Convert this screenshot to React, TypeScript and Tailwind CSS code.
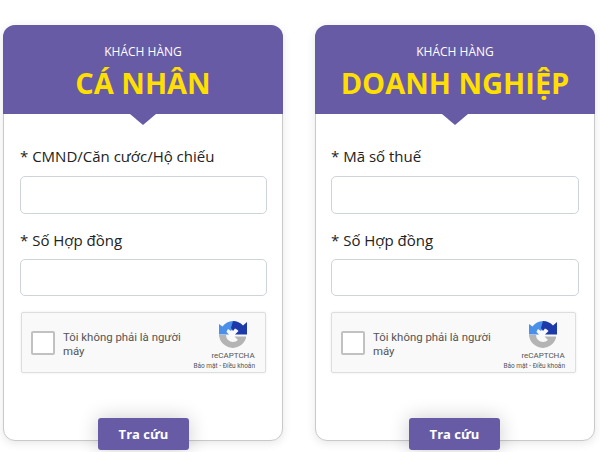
const font = { fontFamily: '"Open Sans", "Noto Sans", sans-serif' };

function RecaptchaLogo() {
  return (
    <svg width="28" height="28" viewBox="0 0 28 28">
      <path d="M14 0 L14 7 L12 10 L9 8 A7 7 0 0 0 7.5 11 L10 13.5 L0 13.5 L0 3 L3.5 5.5 A13.5 13.5 0 0 1 14 0 Z" fill="#4a90e8" />
      <path d="M14 0 A13.5 13.5 0 0 1 24 4.5 L28 1 L28 13.5 L16 13.5 L19.5 10 A7 7 0 0 0 16 7.5 L14 10 L12 7 Z" fill="#1c3aa9" />
      <path d="M0 14 L7 14 A7 7 0 0 0 14 21 A7 7 0 0 0 19 19 L15.5 15.5 L27 15.5 L27 17 A13.8 13.8 0 0 1 0 14 Z" fill="#b4b4b4" />
    </svg>
  );
}

function Captcha() {
  return (
    <div className="w-[245px] h-[61px] flex items-stretch bg-[#f9f9f9] border border-[#dedede] rounded-[2px] shadow-[0_0_3px_rgba(0,0,0,0.08)]">
      <div className="flex items-center pl-[9px] pr-[8px]">
        <div className="w-[24px] h-[24px] bg-white border-2 border-[#c1c1c1] rounded-[2px]" />
      </div>
      <div className="flex-1 flex items-center text-[11.4px] leading-[14px] text-[#555] pr-1 pt-[2px]" style={{ fontFamily: '"Roboto", sans-serif' }}>
        <span>Tôi không phải là người máy</span>
      </div>
      <div className="w-[68px] shrink-0 flex flex-col items-center pt-[8px] pr-[2px] text-[#555]" style={{ fontFamily: '"Roboto", sans-serif' }}>
        <div className="pl-[6px]"><RecaptchaLogo /></div>
        <span className="text-[8px] leading-[10px] mt-[2px] pl-[6px]">reCAPTCHA</span>
        <span className="text-[6.5px] leading-[8px] mt-[1px] whitespace-nowrap self-end mr-[8px]">Bảo mật - Điều khoản</span>
      </div>
    </div>
  );
}

function Field({ label, className, inputClass }: { label: string; className: string; inputClass: string }) {
  return (
    <div className={className}>
      <div className="text-[15px] leading-[22px] text-[#222]">{label}</div>
      <div className={`${inputClass} w-full bg-white border border-[#ced4da] rounded-[5px]`} />
    </div>
  );
}

function Card({ title, label, pad, shift }: { title: string; label: string; pad: string; shift: string }) {
  return (
    <div className="w-[280px] h-[416px] flex flex-col bg-white border border-[#c9c9c9] rounded-[12px] shadow-[0_2px_10px_rgba(0,0,0,0.1)]">
      <div className="relative h-[89px] shrink-0 -mx-px -mt-px bg-[#685ba6] rounded-t-[12px] flex flex-col items-center">
        <div className="text-[12px] leading-[16px] text-white mt-[19px]">KHÁCH HÀNG</div>
        <div className="text-[29px] leading-[38px] font-bold text-[#ffdf00] mt-[4px] whitespace-nowrap">{title}</div>
        <div className="absolute left-1/2 -translate-x-1/2 top-full w-0 h-0 border-l-[13px] border-r-[13px] border-t-[11px] border-l-transparent border-r-transparent border-t-[#685ba6]" />
      </div>
      <div className={`flex-1 flex flex-col ${pad} pr-[15px]`}>
        <Field label={label} className="mt-[31px]" inputClass="mt-[9px] h-[38px]" />
        <Field label="* Số Hợp đồng" className="mt-[15px]" inputClass="mt-[8px] h-[37px]" />
        <div className={`mt-[16px] ${shift}`}>
          <Captcha />
        </div>
        <div className="mt-auto -mb-[10px] pl-[78px] flex">
          <div className="w-[91px] h-[32px] pt-[2px] flex items-center justify-center bg-[#685ba6] rounded-[3px] text-white text-[13px] font-bold shadow-[0_0_20px_rgba(0,0,0,0.2)]">Tra cứu</div>
        </div>
      </div>
    </div>
  );
}

export default function App() {
  return (
    <div className="w-[600px] h-[452px] overflow-hidden bg-white flex gap-[32px] pl-[3px] pt-[25px]" style={font}>
      <Card title="CÁ NHÂN" label="* CMND/Căn cước/Hộ chiếu" pad="pl-[16px]" shift="pl-px" />
      <Card title="DOANH NGHIỆP" label="* Mã số thuế" pad="pl-[15px]" shift="" />
    </div>
  );
}
